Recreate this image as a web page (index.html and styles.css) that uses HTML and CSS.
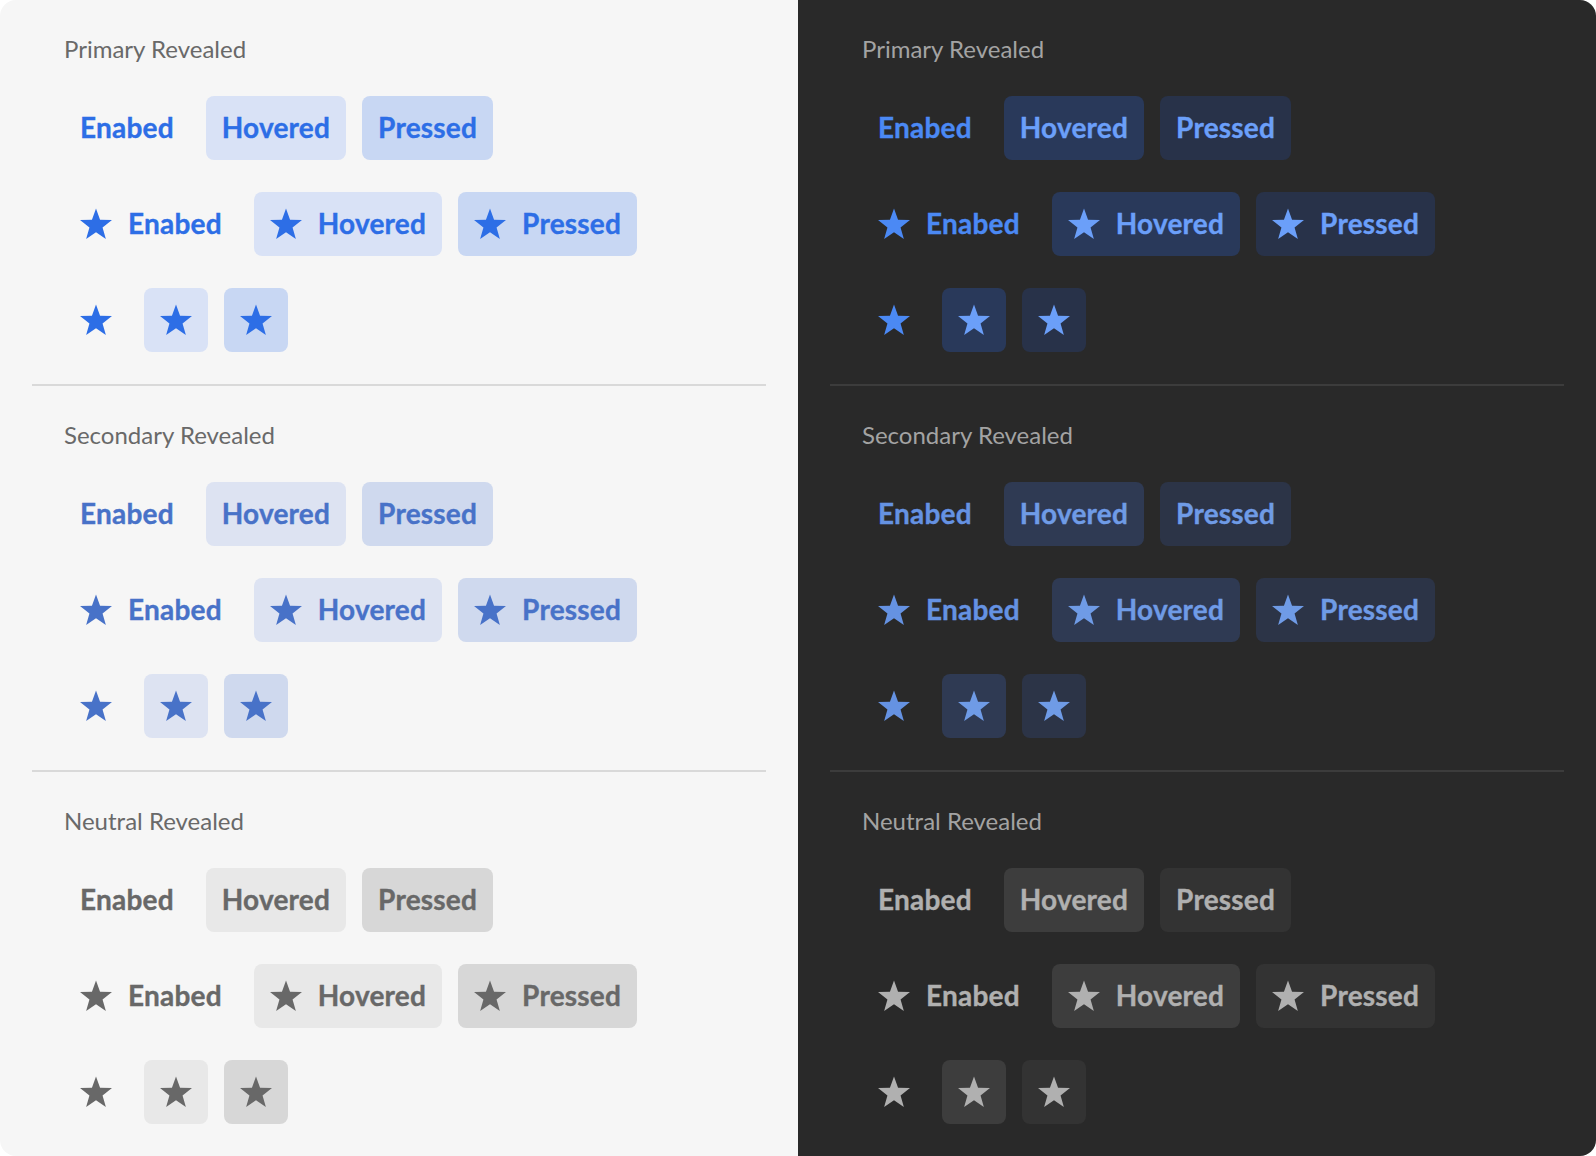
FILE: index.html
```html
<!DOCTYPE html>
<html lang="en">
<head>
<meta charset="utf-8">
<title>Revealed Buttons</title>
<link rel="stylesheet" href="styles.css">
</head>
<body>
<svg class="defs" width="0" height="0" aria-hidden="true">
  <symbol id="star" viewBox="0 -1 32 32">
    <polygon points="16,0.5 20.06,11.72 31.98,12.11 22.56,19.43 25.87,30.89 16,24.2 6.13,30.89 9.44,19.43 0.02,12.11 11.94,11.72"/>
  </symbol>
</svg>
<div class="board">
  <div class="panel light">
    <section class="group primary">
      <h2 class="title">Primary Revealed</h2>
      <div class="rows">
        <div class="row"><span class="btn enabled">Enabed</span><span class="btn hovered">Hovered</span><span class="btn pressed">Pressed</span></div>
        <div class="row"><span class="btn enabled"><svg class="ic"><use href="#star"/></svg>Enabed</span><span class="btn hovered"><svg class="ic"><use href="#star"/></svg>Hovered</span><span class="btn pressed"><svg class="ic"><use href="#star"/></svg>Pressed</span></div>
        <div class="row"><span class="btn sq enabled"><svg class="ic"><use href="#star"/></svg></span><span class="btn sq hovered"><svg class="ic"><use href="#star"/></svg></span><span class="btn sq pressed"><svg class="ic"><use href="#star"/></svg></span></div>
      </div>
    </section>
    <section class="group secondary">
      <h2 class="title">Secondary Revealed</h2>
      <div class="rows">
        <div class="row"><span class="btn enabled">Enabed</span><span class="btn hovered">Hovered</span><span class="btn pressed">Pressed</span></div>
        <div class="row"><span class="btn enabled"><svg class="ic"><use href="#star"/></svg>Enabed</span><span class="btn hovered"><svg class="ic"><use href="#star"/></svg>Hovered</span><span class="btn pressed"><svg class="ic"><use href="#star"/></svg>Pressed</span></div>
        <div class="row"><span class="btn sq enabled"><svg class="ic"><use href="#star"/></svg></span><span class="btn sq hovered"><svg class="ic"><use href="#star"/></svg></span><span class="btn sq pressed"><svg class="ic"><use href="#star"/></svg></span></div>
      </div>
    </section>
    <section class="group neutral">
      <h2 class="title">Neutral Revealed</h2>
      <div class="rows">
        <div class="row"><span class="btn enabled">Enabed</span><span class="btn hovered">Hovered</span><span class="btn pressed">Pressed</span></div>
        <div class="row"><span class="btn enabled"><svg class="ic"><use href="#star"/></svg>Enabed</span><span class="btn hovered"><svg class="ic"><use href="#star"/></svg>Hovered</span><span class="btn pressed"><svg class="ic"><use href="#star"/></svg>Pressed</span></div>
        <div class="row"><span class="btn sq enabled"><svg class="ic"><use href="#star"/></svg></span><span class="btn sq hovered"><svg class="ic"><use href="#star"/></svg></span><span class="btn sq pressed"><svg class="ic"><use href="#star"/></svg></span></div>
      </div>
    </section>
  </div>
  <div class="panel dark">
    <section class="group primary">
      <h2 class="title">Primary Revealed</h2>
      <div class="rows">
        <div class="row"><span class="btn enabled">Enabed</span><span class="btn hovered">Hovered</span><span class="btn pressed">Pressed</span></div>
        <div class="row"><span class="btn enabled"><svg class="ic"><use href="#star"/></svg>Enabed</span><span class="btn hovered"><svg class="ic"><use href="#star"/></svg>Hovered</span><span class="btn pressed"><svg class="ic"><use href="#star"/></svg>Pressed</span></div>
        <div class="row"><span class="btn sq enabled"><svg class="ic"><use href="#star"/></svg></span><span class="btn sq hovered"><svg class="ic"><use href="#star"/></svg></span><span class="btn sq pressed"><svg class="ic"><use href="#star"/></svg></span></div>
      </div>
    </section>
    <section class="group secondary">
      <h2 class="title">Secondary Revealed</h2>
      <div class="rows">
        <div class="row"><span class="btn enabled">Enabed</span><span class="btn hovered">Hovered</span><span class="btn pressed">Pressed</span></div>
        <div class="row"><span class="btn enabled"><svg class="ic"><use href="#star"/></svg>Enabed</span><span class="btn hovered"><svg class="ic"><use href="#star"/></svg>Hovered</span><span class="btn pressed"><svg class="ic"><use href="#star"/></svg>Pressed</span></div>
        <div class="row"><span class="btn sq enabled"><svg class="ic"><use href="#star"/></svg></span><span class="btn sq hovered"><svg class="ic"><use href="#star"/></svg></span><span class="btn sq pressed"><svg class="ic"><use href="#star"/></svg></span></div>
      </div>
    </section>
    <section class="group neutral">
      <h2 class="title">Neutral Revealed</h2>
      <div class="rows">
        <div class="row"><span class="btn enabled">Enabed</span><span class="btn hovered">Hovered</span><span class="btn pressed">Pressed</span></div>
        <div class="row"><span class="btn enabled"><svg class="ic"><use href="#star"/></svg>Enabed</span><span class="btn hovered"><svg class="ic"><use href="#star"/></svg>Hovered</span><span class="btn pressed"><svg class="ic"><use href="#star"/></svg>Pressed</span></div>
        <div class="row"><span class="btn sq enabled"><svg class="ic"><use href="#star"/></svg></span><span class="btn sq hovered"><svg class="ic"><use href="#star"/></svg></span><span class="btn sq pressed"><svg class="ic"><use href="#star"/></svg></span></div>
      </div>
    </section>
  </div>
</div>
</body>
</html>
```

FILE: styles.css
```css
* { box-sizing: border-box; }
html, body { margin: 0; padding: 0; background: #ffffff; }
body { font-family: Lato, "Noto Sans", sans-serif; }

.defs { position: absolute; width: 0; height: 0; overflow: hidden; }

.board {
  display: grid;
  grid-template-columns: 798px 798px;
  width: 1596px;
  height: 1156px;
  border-radius: 16px;
  overflow: hidden;
}

.panel { padding: 0 32px; }
.panel.light { background: #f6f6f6; }
.panel.dark { background: #292929; }

.group { padding: 33px 32px 32px; }
.light .group + .group { border-top: 2px solid #d9d9d9; }
.dark .group + .group { border-top: 2px solid #3c3c3c; }

.title {
  margin: 0 0 31px;
  font-size: 24px;
  line-height: 32px;
  font-weight: 400;
}
.light .title { color: #696969; }
.dark .title { color: #a3a3a3; }

.rows { display: flex; flex-direction: column; gap: 32px; }
.row { display: flex; gap: 16px; }

.btn {
  display: inline-flex;
  align-items: center;
  gap: 16px;
  height: 64px;
  padding: 0 16px 2px;
  border-radius: 8px;
  font-size: 28px;
  font-weight: 700;
  letter-spacing: 0.2px;
  line-height: 1;
  -webkit-text-stroke: 0.35px currentColor;
}
.btn.sq { width: 64px; padding: 0 0 2px; justify-content: center; }
.ic { width: 32px; height: 32px; fill: currentColor; flex: none; }

/* light */
.light .primary .btn { color: #2d6ee6; }
.light .primary .hovered { background: #d9e2f6; }
.light .primary .pressed { background: #c8d7f3; }

.light .secondary .btn { color: #4872c8; }
.light .secondary .hovered { background: #dde3f2; }
.light .secondary .pressed { background: #cfd9ee; }

.light .neutral .btn { color: #686868; }
.light .neutral .hovered { background: #e8e8e8; }
.light .neutral .pressed { background: #d7d7d7; }

/* dark */
.dark .primary .btn { color: #4b89f4; }
.dark .primary .hovered { background: #29395a; color: #6b9ff9; }
.dark .primary .pressed { background: #283249; color: #6b9ff9; }

.dark .secondary .btn { color: #6592e2; }
.dark .secondary .hovered { background: #2f3a53; color: #6f9be6; }
.dark .secondary .pressed { background: #2c3447; color: #6f9be6; }

.dark .neutral .btn { color: #b0b0b0; }
.dark .neutral .hovered { background: #3d3d3d; }
.dark .neutral .pressed { background: #333333; }
```
